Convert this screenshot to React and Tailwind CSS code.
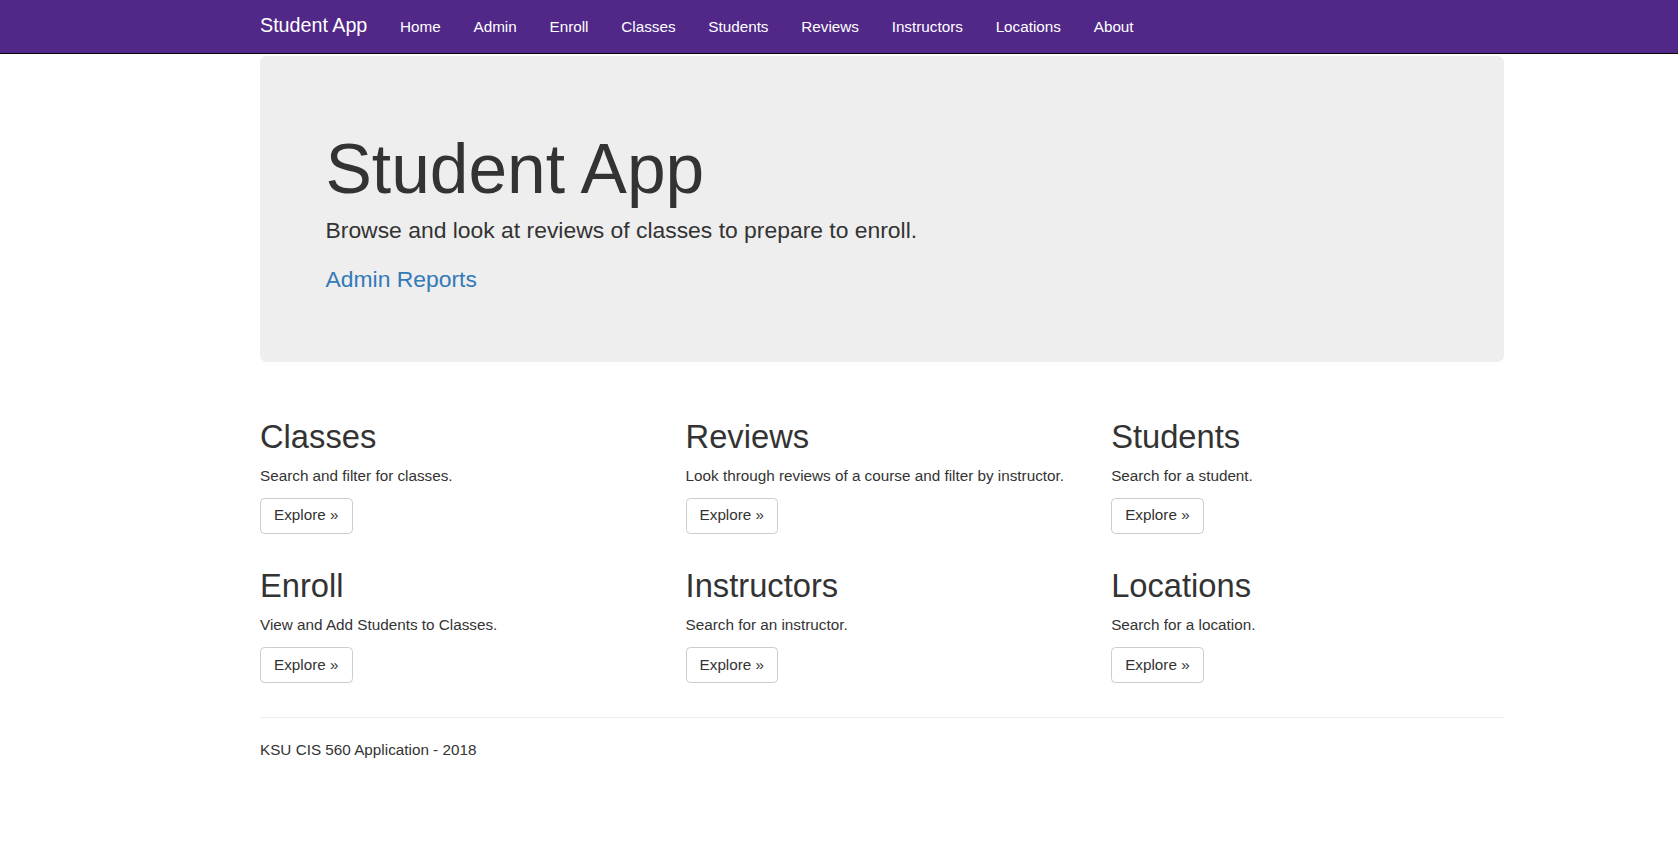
import React from "react";

const navLinks = ["Home", "Admin", "Enroll", "Classes", "Students", "Reviews", "Instructors", "Locations", "About"];

const sections = [
  { title: "Classes", desc: "Search and filter for classes." },
  { title: "Reviews", desc: "Look through reviews of a course and filter by instructor." },
  { title: "Students", desc: "Search for a student." },
  { title: "Enroll", desc: "View and Add Students to Classes." },
  { title: "Instructors", desc: "Search for an instructor." },
  { title: "Locations", desc: "Search for a location." },
];

export default function App() {
  return (
    <div className="min-h-[844px] bg-white text-[#333333] font-['Liberation_Sans',Arial,sans-serif]">
      <nav className="h-[54px] bg-[#512888] border-b border-[#080808]">
        <div className="ml-[260px] w-[1244px] flex items-start">
          <a className="pr-[16.4px] text-[19.7px] leading-[21.8px] pt-[15px] text-white whitespace-nowrap">Student App</a>
          <ul className="flex">
            {navLinks.map((l) => (
              <li key={l}>
                <a className="block px-[16.37px] pt-[16px] text-[15.28px] leading-[21.8px] text-white whitespace-nowrap">{l}</a>
              </li>
            ))}
          </ul>
        </div>
      </nav>

      <main className="ml-[260px] w-[1244px]">
        <div className="mt-[1.6px] bg-[#eeeeee] rounded-[6.5px] pl-[65.5px] pt-[75px] pb-[66.6px]">
          <h1 className="text-[69.5px] leading-[76px] text-[#333333]">Student App</h1>
          <p className="mt-[7.1px] text-[22.9px] leading-[32.7px]">Browse and look at reviews of classes to prepare to enroll.</p>
          <p className="mt-[16.7px] text-[22.9px] leading-[32.7px]">
            <a className="text-[#337ab7]">Admin Reports</a>
          </p>
        </div>

        <div className="mt-[56.2px] grid grid-cols-3 gap-x-[32.7px] gap-y-[34px]">
          {sections.map((s) => (
            <div key={s.title}>
              <h2 className="text-[32.7px] leading-[36px]">{s.title}</h2>
              <p className="mt-[10.2px] text-[15.28px] leading-[21.8px]">{s.desc}</p>
              <div className="mt-[11.4px]">
                <a className="inline-flex items-center h-[36px] px-[13px] border border-[#cccccc] rounded-[4.4px] bg-white text-[15.28px] text-[#333333] whitespace-nowrap">
                  Explore »
                </a>
              </div>
            </div>
          ))}
        </div>

        <hr className="mt-[34px] border-0 border-t border-[#eeeeee]" />
        <footer className="mt-[21px]">
          <p className="text-[15.28px] leading-[21.8px]">KSU CIS 560 Application - 2018</p>
        </footer>
      </main>
    </div>
  );
}
